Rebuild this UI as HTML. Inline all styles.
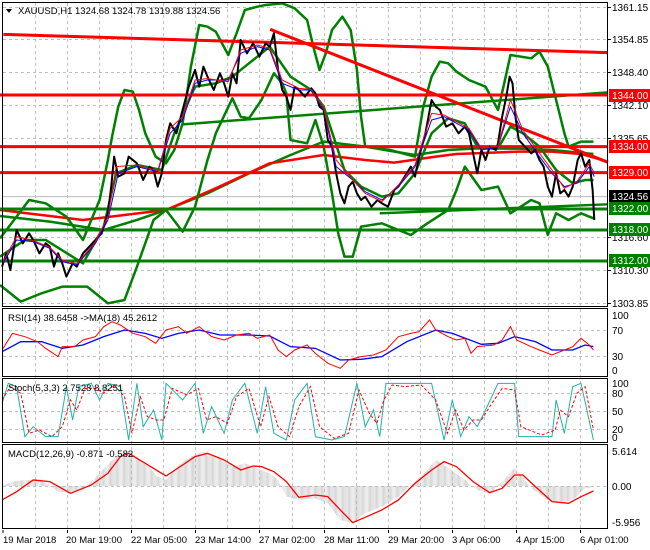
<!DOCTYPE html>
<html><head><meta charset="utf-8"><style>
html,body{margin:0;padding:0;background:#fff;}
svg{display:block;font-family:"Liberation Sans",sans-serif;}
</style></head><body>
<svg width="650" height="550" viewBox="0 0 650 550" xmlns="http://www.w3.org/2000/svg">
<defs>
<pattern id="hist" width="2.6" height="4" patternUnits="userSpaceOnUse"><rect x="0" y="0" width="1" height="4" fill="#b4b4b4"/></pattern>
</defs>
<rect width="650" height="550" fill="#fff"/>
<g stroke="#c0c0c0" stroke-dasharray="3,3" stroke-width="1">
<line x1="35.5" y1="3" x2="35.5" y2="528"/><line x1="67.5" y1="3" x2="67.5" y2="528"/><line x1="99.5" y1="3" x2="99.5" y2="528"/><line x1="131.5" y1="3" x2="131.5" y2="528"/><line x1="163.5" y1="3" x2="163.5" y2="528"/><line x1="195.5" y1="3" x2="195.5" y2="528"/><line x1="227.5" y1="3" x2="227.5" y2="528"/><line x1="259.5" y1="3" x2="259.5" y2="528"/><line x1="292.5" y1="3" x2="292.5" y2="528"/><line x1="324.5" y1="3" x2="324.5" y2="528"/><line x1="356.5" y1="3" x2="356.5" y2="528"/><line x1="388.5" y1="3" x2="388.5" y2="528"/><line x1="420.5" y1="3" x2="420.5" y2="528"/><line x1="452.5" y1="3" x2="452.5" y2="528"/><line x1="484.5" y1="3" x2="484.5" y2="528"/><line x1="516.5" y1="3" x2="516.5" y2="528"/><line x1="548.5" y1="3" x2="548.5" y2="528"/><line x1="580.5" y1="3" x2="580.5" y2="528"/>
<line x1="3" y1="7.5" x2="607" y2="7.5"/><line x1="3" y1="39.5" x2="607" y2="39.5"/><line x1="3" y1="72.5" x2="607" y2="72.5"/><line x1="3" y1="105.5" x2="607" y2="105.5"/><line x1="3" y1="138.5" x2="607" y2="138.5"/><line x1="3" y1="237.5" x2="607" y2="237.5"/><line x1="3" y1="270.5" x2="607" y2="270.5"/><line x1="3" y1="303.5" x2="607" y2="303.5"/>
<line x1="3" y1="330.5" x2="607" y2="330.5"/><line x1="3" y1="356.5" x2="607" y2="356.5"/>
<line x1="3" y1="393.5" x2="607" y2="393.5"/><line x1="3" y1="411.5" x2="607" y2="411.5"/><line x1="3" y1="429.5" x2="607" y2="429.5"/>
<line x1="3" y1="486.5" x2="607" y2="486.5"/>
</g>
<g transform="scale(0.415,0.3333)" fill="none" stroke-linejoin="round">
<polyline vector-effect="non-scaling-stroke" stroke="#bbb" stroke-width="1" points="5,590 1465,590"/>
<polyline vector-effect="non-scaling-stroke" stroke="#008000" stroke-width="2.5" points="0,648 120,665 250,690 330,660 400,630 500,580 600,520 700,465 780,425 880,440 1000,465 1080,450 1150,445 1250,446 1330,450 1430,462"/>
<polyline vector-effect="non-scaling-stroke" stroke="#ff0000" stroke-width="2.5" points="0,630 200,660 300,645 400,630 520,565 650,490 780,465 880,480 950,488 1050,470 1100,462 1250,455 1330,455 1400,462 1465,485"/>
<polyline vector-effect="non-scaling-stroke" stroke="#008000" stroke-width="2.5" points="0,715 40,650 70,600 110,610 160,650 200,720 240,600 260,480 270,410 285,320 300,270 320,275 335,330 350,400 375,470 400,490 420,450 440,370 460,200 480,75 500,80 520,95 550,165 570,100 590,30 620,20 640,15 680,10 710,25 740,60 755,140 770,210 785,160 800,90 825,50 845,90 860,210 870,350 880,440 940,450 1000,470 1020,320 1040,230 1060,185 1080,190 1100,215 1130,240 1170,260 1200,330 1215,250 1230,165 1280,175 1300,155 1320,200 1340,300 1360,400 1370,440 1400,425 1430,425"/>
<polyline vector-effect="non-scaling-stroke" stroke="#008000" stroke-width="2.5" points="0,855 50,905 100,880 150,860 210,860 260,910 300,900 330,800 370,660 400,630 440,695 470,620 500,480 520,400 560,295 580,350 600,355 630,300 660,220 680,250 690,280 700,420 740,430 760,360 780,440 800,580 815,700 830,770 850,770 870,680 920,670 990,705 1030,670 1080,630 1100,570 1120,500 1160,570 1200,560 1230,640 1280,600 1300,610 1320,705 1340,640 1370,660 1400,640 1430,655"/>
<polyline vector-effect="non-scaling-stroke" stroke="#008000" stroke-width="2.5" points="0,770 60,720 110,720 200,790 250,680 280,520 330,495 390,510 420,400 470,260 520,250 560,230 600,190 650,140 700,230 750,270 780,320 830,510 870,560 920,590 960,580 1000,520 1040,400 1080,355 1120,370 1150,440 1200,445 1230,380 1260,400 1300,440 1340,510 1380,550 1410,540 1430,540"/>
<polyline vector-effect="non-scaling-stroke" stroke="#008000" stroke-width="2.5" points="440,373 1465,277"/>
<polyline vector-effect="non-scaling-stroke" stroke="#008000" stroke-width="2.5" points="915,640 1465,613"/>
<polyline vector-effect="non-scaling-stroke" stroke="#008000" stroke-width="3" points="0,627 1465,627"/>
<polyline vector-effect="non-scaling-stroke" stroke="#008000" stroke-width="3" points="0,690 1465,690"/>
<polyline vector-effect="non-scaling-stroke" stroke="#008000" stroke-width="3" points="0,783 1465,783"/>
<polyline vector-effect="non-scaling-stroke" stroke="#ff0000" stroke-width="3" points="8,103 1465,158"/>
<polyline vector-effect="non-scaling-stroke" stroke="#ff0000" stroke-width="3" points="651,88 1465,487"/>
<polyline vector-effect="non-scaling-stroke" stroke="#ff0000" stroke-width="3" points="0,285 1465,285"/>
<polyline vector-effect="non-scaling-stroke" stroke="#ff0000" stroke-width="3" points="0,440 1465,440"/>
<polyline vector-effect="non-scaling-stroke" stroke="#ff0000" stroke-width="3" points="0,518 1465,518"/>
<polyline vector-effect="non-scaling-stroke" stroke="#000" stroke-width="2" points="5,800 15,760 25,810 40,690 55,730 70,700 80,720 95,760 110,730 120,740 130,800 140,760 150,790 160,830 175,790 185,800 200,760 215,740 230,720 245,700 260,640 268,560 275,470 285,530 300,520 310,470 330,490 345,540 360,500 370,510 380,560 390,520 400,420 410,370 425,400 440,330 455,260 470,210 480,260 490,200 500,230 515,270 530,220 540,250 550,290 560,220 570,250 580,120 595,160 610,130 625,170 640,130 650,140 660,100 670,210 680,270 690,290 700,330 710,260 720,270 735,290 750,265 760,280 770,320 780,330 790,420 800,440 810,520 820,580 830,610 840,560 850,545 860,580 870,600 880,590 895,620 910,600 920,610 935,620 950,570 960,560 975,530 990,500 1000,530 1010,470 1025,400 1040,300 1050,320 1060,330 1075,380 1090,370 1105,400 1120,380 1130,400 1140,460 1150,520 1160,450 1170,480 1180,440 1195,450 1200,430 1210,350 1220,290 1228,230 1235,250 1242,350 1250,420 1265,440 1280,460 1290,450 1300,480 1310,500 1320,560 1330,590 1340,520 1350,580 1360,570 1370,590 1380,560 1392,480 1400,460 1410,500 1420,480 1428,570 1432,660"/>
<polyline vector-effect="non-scaling-stroke" stroke="#0000ff" stroke-width="1" points="5,795 40,720 80,725 120,745 150,785 185,795 230,730 260,660 285,520 330,500 380,515 410,400 440,360 470,250 500,240 550,240 580,160 620,140 650,150 680,250 720,270 750,270 780,330 810,500 850,540 880,575 920,600 960,560 1000,500 1040,360 1070,350 1100,370 1130,390 1160,450 1200,440 1230,320 1260,400 1300,470 1330,520 1360,560 1390,550 1420,500 1432,530"/>
<polyline vector-effect="non-scaling-stroke" stroke="#ff0000" stroke-width="1" points="5,790 40,710 80,722 120,742 150,780 185,792 230,725 260,650 280,500 330,495 380,512 410,385 440,350 470,240 500,236 550,245 580,150 620,135 650,145 680,240 720,265 750,268 780,325 810,480 850,540 880,580 920,605 960,555 1000,495 1040,340 1070,345 1100,365 1130,385 1160,445 1200,438 1230,300 1260,390 1300,460 1330,510 1360,565 1390,545 1420,490 1432,520"/>
</g>
<g transform="translate(0,300) scale(0.415,0.3333)" fill="none">
<polyline vector-effect="non-scaling-stroke" stroke="#0000ff" stroke-width="1.3" points="5,155 50,125 100,125 150,145 200,135 250,110 300,90 350,100 390,115 430,100 480,90 530,105 600,105 650,108 700,140 760,145 820,180 870,178 920,170 980,125 1050,90 1090,100 1160,133 1200,130 1240,110 1290,125 1330,150 1380,150 1410,135 1430,140"/>
<polyline vector-effect="non-scaling-stroke" stroke="#ff0000" stroke-width="1" points="5,150 30,100 60,110 90,125 110,145 140,170 150,140 180,140 200,120 230,110 250,80 270,65 290,75 320,100 350,110 375,130 400,90 430,80 450,100 480,80 510,110 540,120 570,105 600,100 620,115 650,105 670,150 690,170 710,150 740,135 760,160 790,190 820,205 840,180 870,170 900,165 930,150 960,110 990,100 1010,95 1035,60 1050,90 1080,110 1100,120 1120,115 1135,160 1150,140 1190,135 1210,120 1230,80 1245,120 1280,140 1300,150 1330,165 1360,150 1380,140 1400,115 1420,135 1430,150"/>
<polyline vector-effect="non-scaling-stroke" stroke="#20b2aa" stroke-width="1" points="5,310 20,250 40,260 60,410 80,380 110,410 140,410 160,260 175,360 190,260 220,250 240,300 260,250 290,260 310,420 330,250 345,380 370,330 390,420 400,250 440,300 470,250 490,400 510,320 540,400 560,300 590,250 620,400 640,260 660,400 690,420 710,300 740,250 760,410 800,420 830,410 860,250 880,380 900,330 915,410 930,250 960,250 1000,250 1040,250 1070,420 1090,300 1110,410 1130,350 1150,380 1170,330 1200,250 1240,250 1250,410 1300,410 1330,410 1340,300 1360,400 1380,260 1400,250 1430,420"/>
<polyline vector-effect="non-scaling-stroke" stroke="#ff0000" stroke-width="1" stroke-dasharray="3,2" points="5,300 25,260 50,280 70,400 95,390 125,410 150,380 170,300 185,330 205,265 230,265 250,280 275,255 300,290 318,400 338,290 355,350 378,360 395,360 415,265 450,285 478,265 498,360 520,350 548,370 570,290 600,265 628,380 648,290 670,380 698,410 720,320 748,260 770,380 805,415 840,400 865,270 890,340 908,370 925,300 945,255 975,260 1015,255 1050,300 1078,400 1098,330 1118,390 1140,360 1160,360 1180,320 1210,265 1240,270 1255,380 1305,405 1338,390 1350,330 1370,350 1390,280 1410,260 1430,390"/>
<polygon fill="url(#hist)" points="5,558 30,545 60,540 100,540 140,575 170,580 200,570 240,520 270,480 290,460 320,460 350,490 380,530 400,540 430,495 460,470 490,455 520,470 560,500 590,490 620,505 650,520 670,540 690,590 720,600 760,595 790,610 820,660 850,670 880,640 920,620 960,590 1000,545 1030,510 1050,480 1070,495 1110,530 1150,570 1180,580 1210,545 1240,505 1260,530 1280,565 1320,600 1350,610 1380,600 1410,565 1432,560 1432,558"/>
<polyline vector-effect="non-scaling-stroke" stroke="#ff0000" stroke-width="1.3" points="5,600 40,575 80,540 120,545 170,580 220,555 260,520 290,470 310,460 350,490 400,528 440,495 470,470 500,460 540,480 580,510 610,498 630,500 660,515 690,545 720,592 760,585 790,590 820,630 850,668 880,652 920,630 960,600 1000,550 1040,510 1070,485 1100,500 1140,545 1180,578 1210,565 1240,525 1260,525 1290,560 1330,605 1370,610 1400,590 1430,573"/>
</g>
<g stroke="#000" stroke-width="1" fill="none">
<rect x="2.5" y="2.5" width="605" height="304"/>
<rect x="2.5" y="308.5" width="605" height="68"/>
<rect x="2.5" y="378.5" width="605" height="64"/>
<rect x="2.5" y="444.5" width="605" height="84"/>
</g>
<g stroke="#000" stroke-width="1">
<line x1="607" y1="7.5" x2="611" y2="7.5"/><line x1="607" y1="39.5" x2="611" y2="39.5"/><line x1="607" y1="72.5" x2="611" y2="72.5"/><line x1="607" y1="105.5" x2="611" y2="105.5"/><line x1="607" y1="138.5" x2="611" y2="138.5"/><line x1="607" y1="237.5" x2="611" y2="237.5"/><line x1="607" y1="270.5" x2="611" y2="270.5"/><line x1="607" y1="303.5" x2="611" y2="303.5"/>
</g>
<g font-size="10" fill="#000">
<text x="612" y="11">1361.15</text>
<text x="612" y="43">1354.85</text>
<text x="612" y="76">1348.40</text>
<text x="612" y="109">1342.10</text>
<text x="612" y="142">1335.65</text>
<text x="612" y="241">1316.60</text>
<text x="612" y="274">1310.30</text>
<text x="612" y="307">1303.85</text>
</g>
<rect x="609" y="89" width="41" height="13" fill="#ff0000"/><text x="612" y="99" font-size="10" fill="#fff">1344.00</text>
<rect x="609" y="140" width="41" height="13" fill="#ff0000"/><text x="612" y="150" font-size="10" fill="#fff">1334.00</text>
<rect x="609" y="166" width="41" height="13" fill="#ff0000"/><text x="612" y="176" font-size="10" fill="#fff">1329.00</text>
<rect x="609" y="190" width="41" height="13" fill="#000"/><text x="612" y="200" font-size="10" fill="#fff">1324.56</text>
<rect x="609" y="202" width="41" height="13" fill="#008000"/><text x="612" y="212" font-size="10" fill="#fff">1322.00</text>
<rect x="609" y="223" width="41" height="13" fill="#008000"/><text x="612" y="233" font-size="10" fill="#fff">1318.00</text>
<rect x="609" y="254" width="41" height="13" fill="#008000"/><text x="612" y="264" font-size="10" fill="#fff">1312.00</text>
<g font-size="10" fill="#000">
<text x="612" y="319">100</text><text x="612" y="334">70</text><text x="612" y="360">30</text><text x="612" y="374">0</text>
<text x="612" y="387">100</text><text x="612" y="397">80</text><text x="612" y="415">50</text><text x="612" y="433">20</text><text x="612" y="441">0</text>
<text x="612" y="455">5.614</text><text x="612" y="490">0.00</text><text x="612" y="526">-5.956</text>
</g>
<g font-size="9.5" fill="#000">
<text x="3" y="543">19 Mar 2018</text><text x="66" y="543">20 Mar 19:00</text><text x="131" y="543">22 Mar 05:00</text><text x="195" y="543">23 Mar 14:00</text><text x="259" y="543">27 Mar 02:00</text><text x="324" y="543">28 Mar 11:00</text><text x="388" y="543">29 Mar 20:00</text><text x="452" y="543">3 Apr 06:00</text><text x="516" y="543">4 Apr 15:00</text><text x="580" y="543">6 Apr 01:00</text>
<text x="8" y="321">RSI(14) 38.6458  -&gt;MA(18) 45.2612</text>
<text x="8" y="391">Stoch(5,3,3) 2.7528 8.8251</text>
<text x="8" y="457">MACD(12,26,9) -0.871 -0.582</text>
<text x="18" y="14">XAUUSD,H1  1324.68 1324.78 1319.88 1324.56</text>
</g>
<polygon points="6,9 12,9 9,13" fill="#000"/>
<g stroke="#000"><line x1="3" y1="530" x2="3" y2="533"/><line x1="67.5" y1="530" x2="67.5" y2="533"/><line x1="131.5" y1="530" x2="131.5" y2="533"/><line x1="195.5" y1="530" x2="195.5" y2="533"/><line x1="259.5" y1="530" x2="259.5" y2="533"/><line x1="324.5" y1="530" x2="324.5" y2="533"/><line x1="388.5" y1="530" x2="388.5" y2="533"/><line x1="452.5" y1="530" x2="452.5" y2="533"/><line x1="516.5" y1="530" x2="516.5" y2="533"/><line x1="580.5" y1="530" x2="580.5" y2="533"/></g>
</svg>
</body></html>
